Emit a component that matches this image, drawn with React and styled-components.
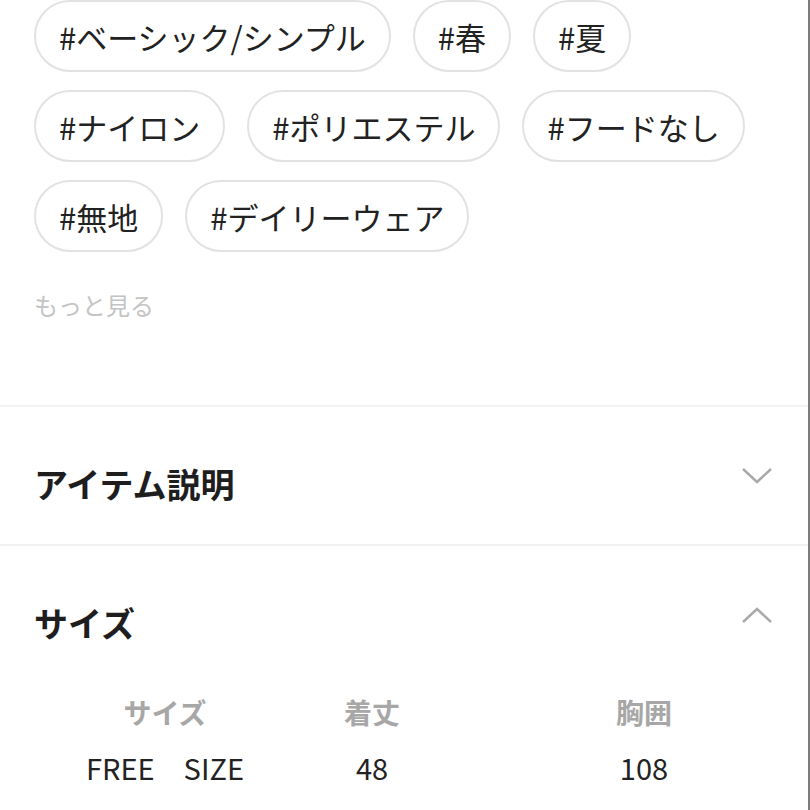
import React from "react";
import { styled, createGlobalStyle } from "styled-components";

const GlobalStyle = createGlobalStyle`
  html, body {
    margin: 0;
    padding: 0;
    background-color: #ffffff;
    overflow: hidden;
  }
  * {
    box-sizing: border-box;
  }
`;

const Container = styled.div`
  width: 810px;
  height: 810px;
  overflow: hidden;
  background-color: #ffffff;
  border-right: 2px solid #7c7c7c;
  font-family: "Noto Sans CJK JP", "Noto Sans", sans-serif;
  color: #222222;
`;

const TagArea = styled.div`
  padding: 0px 34px;
  height: 405px;
`;

const TagList = styled.div`
  display: flex;
  flex-wrap: wrap;
  column-gap: 22px;
  row-gap: 18px;
`;

const Tag = styled.div`
  height: 72px;
  padding: 0px 23px;
  border: 2px solid #e2e2e2;
  border-radius: 36px;
  display: flex;
  align-items: center;
  font-size: 31px;
  color: #222222;
  white-space: nowrap;
`;

const MoreText = styled.p`
  margin: 36px 0px 0px;
  font-size: 24px;
  line-height: 34px;
  color: #c4c4c4;
`;

const Section = styled.div`
  border-top: 2px solid #f2f2f2;
`;

const SectionHeader = styled.div`
  height: 137px;
  padding: 55px 34px 0px;
  display: flex;
  justify-content: space-between;
  align-items: flex-start;
`;

const SectionTitle = styled.h2`
  margin: 0px;
  font-size: 34px;
  line-height: 44px;
  font-weight: 700;
  color: #1e1e1e;
`;

const ChevronBox = styled.div`
  margin-top: 6px;
  margin-right: 2px;
  width: 30px;
  height: 16px;
  display: flex;
`;

const SizeTable = styled.div`
  padding: 9px 0px 0px 34px;
  display: grid;
  grid-template-columns: 262px 152px 392px;
  row-gap: 15px;
`;

const Cell = styled.div`
  text-align: center;
  line-height: 40px;
  font-size: ${(p) => (p.$head ? "28px" : "29px")};
  font-weight: ${(p) => (p.$head ? 700 : 400)};
  color: ${(p) => (p.$head ? "#a7a7a7" : "#222222")};
  white-space: nowrap;
`;

function Chevron({ up }) {
  return (
    <ChevronBox>
      <svg width="30" height="16" viewBox="0 0 30 16">
        <polyline
          points={up ? "1,15 15,2 29,15" : "1,1 15,14 29,1"}
          fill="none"
          stroke="#a9a9a9"
          strokeWidth="2.4"
        />
      </svg>
    </ChevronBox>
  );
}

const tags = [
  "#ベーシック/シンプル",
  "#春",
  "#夏",
  "#ナイロン",
  "#ポリエステル",
  "#フードなし",
  "#無地",
  "#デイリーウェア",
];

const sizeHead = ["サイズ", "着丈", "胸囲"];
const sizeRow = ["FREE\u3000SIZE", "48", "108"];

export default function App() {
  return (
    <>
      <GlobalStyle />
      <Container>
        <TagArea>
          <TagList>
            {tags.map((t) => (
              <Tag key={t}>{t}</Tag>
            ))}
          </TagList>
          <MoreText>もっと見る</MoreText>
        </TagArea>
        <Section>
          <SectionHeader>
            <SectionTitle>アイテム説明</SectionTitle>
            <Chevron />
          </SectionHeader>
        </Section>
        <Section>
          <SectionHeader>
            <SectionTitle>サイズ</SectionTitle>
            <Chevron up />
          </SectionHeader>
          <SizeTable>
            {sizeHead.map((h) => (
              <Cell key={h} $head>
                {h}
              </Cell>
            ))}
            {sizeRow.map((v) => (
              <Cell key={v}>{v}</Cell>
            ))}
          </SizeTable>
        </Section>
      </Container>
    </>
  );
}
